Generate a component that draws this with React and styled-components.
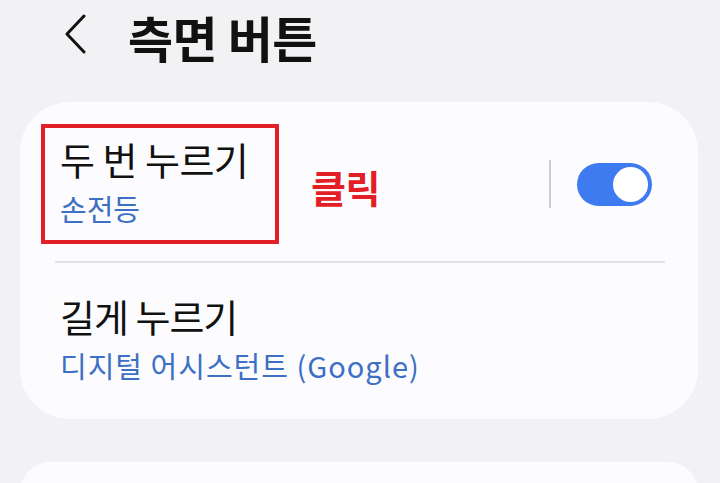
import React from 'react';
import styled, { createGlobalStyle } from 'styled-components';

const GlobalStyle = createGlobalStyle`
    body {
        margin: 0;
        background-color: #f2f2f4;
        font-family: 'Noto Sans CJK KR', 'Noto Sans', sans-serif;
        overflow: hidden;
    }
`;

const Page = styled.div`
    width: 720px;
    height: 483px;
    overflow: hidden;
`;

const Header = styled.header`
    display: flex;
    align-items: center;
    height: 74px;
    padding: 0 0 28px 64px;
`;

const BackButton = styled.button`
    display: flex;
    align-items: center;
    border: none;
    background: none;
    padding: 0;
    margin: -6px 40px 0 0;
    cursor: pointer;
`;

const Title = styled.h1`
    margin: 0;
    font-size: 49px;
    line-height: 72px;
    font-weight: 700;
    color: #111;
    letter-spacing: -0.5px;
`;

const Card = styled.section`
    margin: 0 22px 0 20px;
    background-color: #fcfcfe;
    border-radius: 50px;
    padding-bottom: ${(props) => props.$bottom || 0}px;
`;

const ToggleRow = styled.div`
    display: flex;
    align-items: center;
    padding: 22px 46px 17px 21px;
`;

const Highlight = styled.div`
    width: 238px;
    height: 120px;
    border: 4px solid #e31e26;
    padding: 3px 0 0 15px;
    box-sizing: border-box;
`;

const ItemTitle = styled.div`
    font-size: 38px;
    color: #111;
    line-height: 55px;
    letter-spacing: ${(props) => props.$spacing || 0}px;
`;

const ItemSub = styled.div`
    font-size: 29px;
    color: #3d6fc4;
    line-height: 45px;
    letter-spacing: ${(props) => props.$spacing || 0}px;
`;

const ClickNote = styled.span`
    margin-left: 32px;
    margin-top: 5px;
    font-size: 38px;
    font-weight: 700;
    color: #e31e26;
    letter-spacing: -0.5px;
`;

const Spacer = styled.div`
    flex: 1;
`;

const VDivider = styled.div`
    width: 2px;
    height: 48px;
    background-color: #cfcfd2;
    margin-right: 26px;
`;

const Switch = styled.div`
    width: 75px;
    height: 43px;
    border-radius: 22px;
    background-color: #3e7bf0;
    display: flex;
    align-items: center;
    justify-content: flex-end;
    padding-right: 4px;
    box-sizing: border-box;
`;

const Knob = styled.div`
    width: 35px;
    height: 35px;
    border-radius: 50%;
    background-color: #fff;
`;

const HDivider = styled.hr`
    margin: 0 33px 0 35px;
    border: none;
    height: 2px;
    background-color: #e3e3e6;
`;

const PlainRow = styled.div`
    padding: 25px 0 0 40px;
`;

const SecondCard = styled(Card)`
    margin-top: 43px;
    height: 60px;
`;

const ChevronLeft = () => (
    <svg width="24" height="40" viewBox="0 0 24 40" fill="none">
        <path d="M20 2 L3 20 L20 38" stroke="#111" strokeWidth="3" strokeLinecap="round" strokeLinejoin="round" />
    </svg>
);

const App = () => {
    return (
        <Page>
            <GlobalStyle />
            <Header>
                <BackButton aria-label="뒤로">
                    <ChevronLeft />
                </BackButton>
                <Title>측면 버튼</Title>
            </Header>
            <Card $bottom={31}>
                <ToggleRow>
                    <Highlight>
                        <ItemTitle $spacing={-0.5}>두 번 누르기</ItemTitle>
                        <ItemSub>손전등</ItemSub>
                    </Highlight>
                    <ClickNote>클릭</ClickNote>
                    <Spacer />
                    <VDivider />
                    <Switch>
                        <Knob />
                    </Switch>
                </ToggleRow>
                <HDivider />
                <PlainRow>
                    <ItemTitle $spacing={-1}>길게 누르기</ItemTitle>
                    <ItemSub $spacing={1}>디지털 어시스턴트 (Google)</ItemSub>
                </PlainRow>
            </Card>
            <SecondCard />
        </Page>
    );
};

export default App;
